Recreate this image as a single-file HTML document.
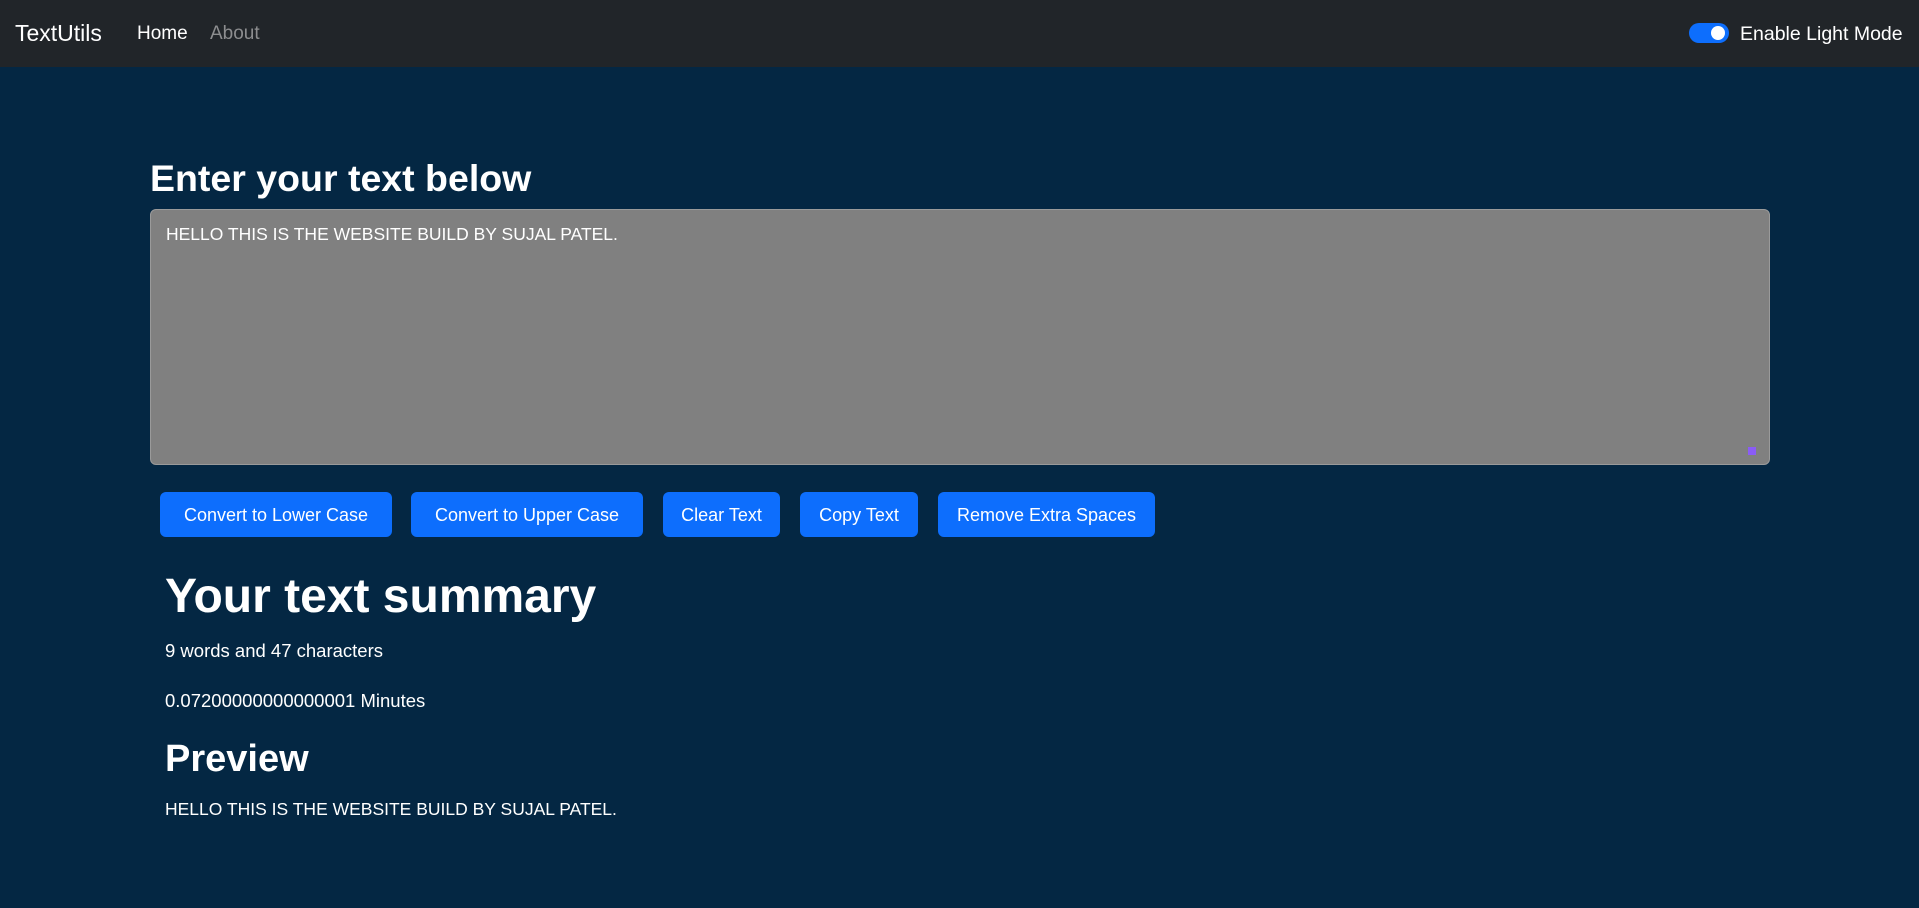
<!DOCTYPE html>
<html><head><meta charset="utf-8">
<style>
*{box-sizing:border-box;margin:0;padding:0}
body{width:1919px;height:908px;background:#042743;font-family:"Liberation Sans",sans-serif;color:#fff;position:relative;overflow:hidden}
.nav{position:absolute;left:0;top:0;width:1919px;height:67px;background:#212529}
.a{position:absolute;white-space:nowrap}
.btn{position:absolute;top:492px;height:45px;background:#0d6efd;border-radius:6px;font-size:18px;line-height:47px;text-align:center;color:#fff}
</style></head><body>
<div class="nav">
  <div class="a" style="left:15px;top:20px;font-size:23px;">TextUtils</div>
  <div class="a" style="left:137px;top:23px;font-size:19px;">Home</div>
  <div class="a" style="left:210px;top:23px;font-size:19px;color:#8c8d8f">About</div>
  <div class="a" style="left:1689px;top:23px;width:40px;height:20px;border-radius:10px;background:#0d6efd"><div style="position:absolute;right:4px;top:3px;width:14px;height:14px;border-radius:50%;background:#fff"></div></div>
  <div class="a" style="left:1740px;top:23px;font-size:19.5px;">Enable Light Mode</div>
</div>
<div class="a" style="left:150px;top:157px;font-size:37.5px;font-weight:bold;">Enter your text below</div>
<div class="a" style="left:150px;top:209px;width:1620px;height:256px;background:#808080;border-radius:6px;border:1px solid #9a9a9a"></div>
<div class="a" style="left:166px;top:224px;font-size:17.5px;">HELLO THIS IS THE WEBSITE BUILD BY SUJAL PATEL.</div>
<div class="a" style="left:1748px;top:447px;width:8px;height:8px;background:#8a5cf6"></div>
<div class="btn" style="left:160px;width:232px">Convert to Lower Case</div>
<div class="btn" style="left:411px;width:232px">Convert to Upper Case</div>
<div class="btn" style="left:663px;width:117px">Clear Text</div>
<div class="btn" style="left:800px;width:118px">Copy Text</div>
<div class="btn" style="left:938px;width:217px">Remove Extra Spaces</div>
<div class="a" style="left:165px;top:569px;font-size:48px;font-weight:bold;">Your text summary</div>
<div class="a" style="left:165px;top:640px;font-size:18.5px;">9 words and 47 characters</div>
<div class="a" style="left:165px;top:690px;font-size:18.5px;">0.07200000000000001 Minutes</div>
<div class="a" style="left:165px;top:738px;font-size:38px;font-weight:bold;">Preview</div>
<div class="a" style="left:165px;top:799px;font-size:17.5px;">HELLO THIS IS THE WEBSITE BUILD BY SUJAL PATEL.</div>
</body></html>
